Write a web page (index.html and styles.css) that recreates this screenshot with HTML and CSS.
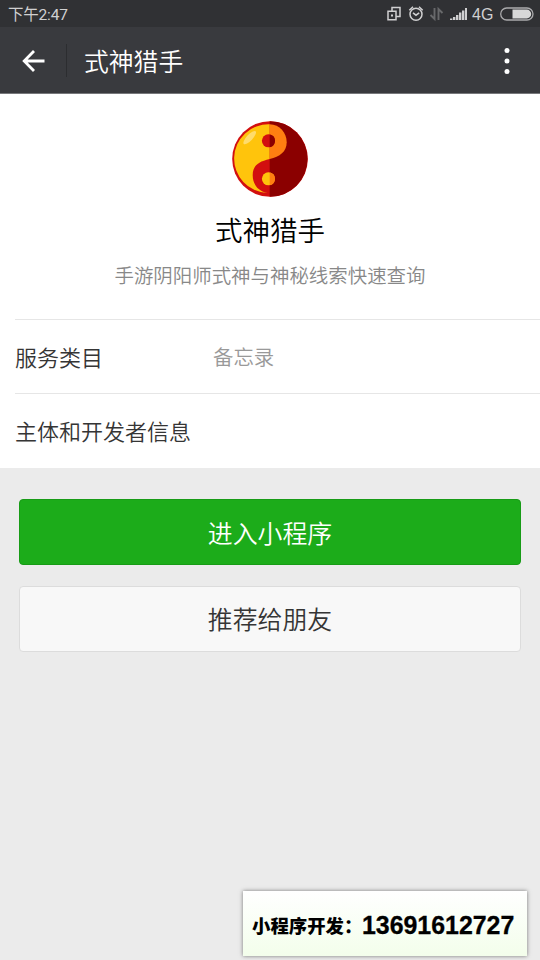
FILE: index.html
```html
<!DOCTYPE html>
<html lang="zh-CN">
<head>
<meta charset="UTF-8">
<title>式神猎手</title>
<link rel="stylesheet" href="styles.css">
</head>
<body>
<div class="status">
  <span class="time">下午2:47</span>
  <svg class="status-icons" width="160" height="27" viewBox="380 0 160 27" fill="none" stroke="#d0d0d1">
    <path d="M392 10.500V7.500H400V16.500H396.500M388 11.200H396V19.700H388Z" stroke-width="1.500"/>
    <path d="M391 14.500h2v2h-2z" fill="#d0d0d1" stroke="none"/>
    <circle cx="416" cy="14.200" r="6" stroke-width="1.500"/>
    <path d="M409.300 10.200l3.700-3.500M422.700 10.200L419 6.700M413 12.800l3 2.400 3.200-2.400" stroke-width="1.500"/>
    <path d="M434.500 8v11l-4-4M438.500 20V9l4 4" stroke="#68696b" stroke-width="1.900"/>
    <path d="M450 20v-1.500h2.400V20zM453 20v-3h2.400v3zM456 20v-5h2.400v5zM459 20v-7.500h2.400V20zM462 20v-9.500h2.400V20zM465 20V8h2v12z" fill="#d0d0d1" stroke="none"/>
    <text class="network" x="472" y="20">4G</text>
    <rect x="500.700" y="8" width="32.300" height="12" rx="6" stroke="#aaaaac" stroke-width="1.300"/>
    <path d="M512.500 9.600H526.800A4.400 4.400 0 0 1 526.800 18.400H512.500Z" fill="#d8d8d8" stroke="none"/>
  </svg>
</div>
<header class="bar">
  <svg class="back" width="24" height="24" viewBox="0 0 24 24" fill="none" stroke="#fff" stroke-width="2.800"><path d="M13 2L3.200 12L13 22M4 12H23.500"/></svg>
  <span class="divider"></span>
  <h1 class="bar-title">式神猎手</h1>
  <svg class="more" width="6" height="28" viewBox="0 0 6 28" fill="#fff"><circle cx="3" cy="3.500" r="2.500"/><circle cx="3" cy="14" r="2.500"/><circle cx="3" cy="24.500" r="2.500"/></svg>
</header>
<main>
  <section class="profile">
    <svg class="logo" width="76" height="76" viewBox="12.300 10.700 76 76">
      <circle cx="50.300" cy="48.700" r="37.800" fill="#d20f0f"/>
      <path d="M50 10.900A37.800 37.800 0 0 1 50 86.500Z" fill="#8b0000"/>
      <path d="M50 14A34.300 34.300 0 0 0 47.500 82.600C37.500 80.500 33 73 33 65C33 56 38 51.500 50 48.800Z" fill="#ffc40c"/>
      <path d="M50 14C60 14 67 22.500 67 32C67 41.500 60 46.500 50 48.800Z" fill="#ff7f11"/>
      <circle cx="48.700" cy="30.500" r="6.500" fill="#d20f0f"/>
      <path d="M50 24.100A6.500 6.500 0 0 1 50 36.900Z" fill="#8b0000"/>
      <circle cx="48.700" cy="68.500" r="6.500" fill="#ffc40c"/>
      <path d="M50 62.100A6.500 6.500 0 0 1 50 74.900Z" fill="#ff7f11"/>
      <ellipse cx="30" cy="27.300" rx="8.700" ry="3" transform="rotate(-47 30 27.300)" fill="#ffdc6b"/>
    </svg>
    <h2 class="name">式神猎手</h2>
    <p class="desc">手游阴阳师式神与神秘线索快速查询</p>
  </section>
  <section class="rows">
    <div class="row"><span class="label">服务类目</span><span class="value">备忘录</span></div>
    <div class="row"><span class="label">主体和开发者信息</span></div>
  </section>
</main>
<div class="actions">
  <button class="btn primary">进入小程序</button>
  <button class="btn">推荐给朋友</button>
</div>
<aside class="contact"><span class="contact-label">小程序开发：</span><span class="phone">13691612727</span></aside>
</body>
</html>
```
FILE: styles.css
```css
* { box-sizing: border-box; }
body {
  margin: 0;
  height: 960px;
  overflow: hidden;
  display: flex;
  flex-direction: column;
  background: #ebebeb;
  color: #353535;
  font-family: "Noto Sans CJK SC", sans-serif;
  font-weight: 350;
}
h1, h2, p { margin: 0; font-weight: 350; }
svg { display: block; flex: none; }
.status {
  height: 27px;
  display: flex;
  align-items: center;
  justify-content: space-between;
  padding-left: 8px;
  background: #303134;
  color: #d0d0d1;
}
.time { padding-top: 3px; font-family: Roboto, "Noto Sans CJK SC", sans-serif; font-size: 15.500px; font-weight: 400; line-height: 24px; letter-spacing: -0.200px; }
.network { font: 400 16px "Liberation Sans", sans-serif; fill: #d0d0d1; stroke: none; }
.bar {
  height: 67px;
  display: flex;
  align-items: center;
  padding: 1px 30px 0 21px;
  background: #393a3e;
  border-bottom: 1px solid #77787b;
}
.divider { width: 1px; height: 33px; margin-left: 21px; background: #2c2d30; }
.bar-title { margin: -1px 0 0 17px; color: #fff; font-size: 24.800px; line-height: 36px; }
.more { margin-left: auto; }
main { height: 374px; background: #fff; }
.profile {
  height: 225px;
  padding-top: 27px;
  display: flex;
  flex-direction: column;
  align-items: center;
}
.name { margin-top: 12px; color: #000; font-size: 27.500px; line-height: 40px; }
.desc { margin-top: 12px; color: #888; font-size: 19.450px; line-height: 28px; }
.rows { margin-left: 15px; }
.row {
  height: 74px;
  display: flex;
  align-items: center;
  padding-bottom: 2px;
  border-top: 1px solid #e6e6e6;
}
.label { width: 198px; font-size: 22px; line-height: 32px; }
.value { color: #999; font-size: 20.400px; line-height: 32px; }
.actions {
  display: flex;
  flex-direction: column;
  gap: 21px;
  padding: 31px 19px 0 19px;
}
.btn {
  height: 66px;
  padding: 0 0 2px;
  border: 1px solid #dcdcdc;
  border-radius: 4px;
  background: #f8f8f8;
  color: #353535;
  font: inherit;
  font-size: 24.900px;
}
.primary { padding-bottom: 1px; background: #1cac1a; border-color: #179b16; color: #fff; }
.contact {
  width: 284px;
  height: 65px;
  margin: auto 13px 4px auto;
  display: flex;
  align-items: center;
  padding: 3px 0 0 9px;
  background: linear-gradient(#fff, #f3feeb);
  box-shadow: 0 0 4px rgba(0, 0, 0, .5);
  color: #000;
  white-space: nowrap;
}
.contact-label { width: 110px; font-size: 18.400px; font-weight: 900; }
.phone { font-family: "Liberation Sans", sans-serif; font-size: 24.900px; font-weight: 700; -webkit-text-stroke: .3px #000; }
```
